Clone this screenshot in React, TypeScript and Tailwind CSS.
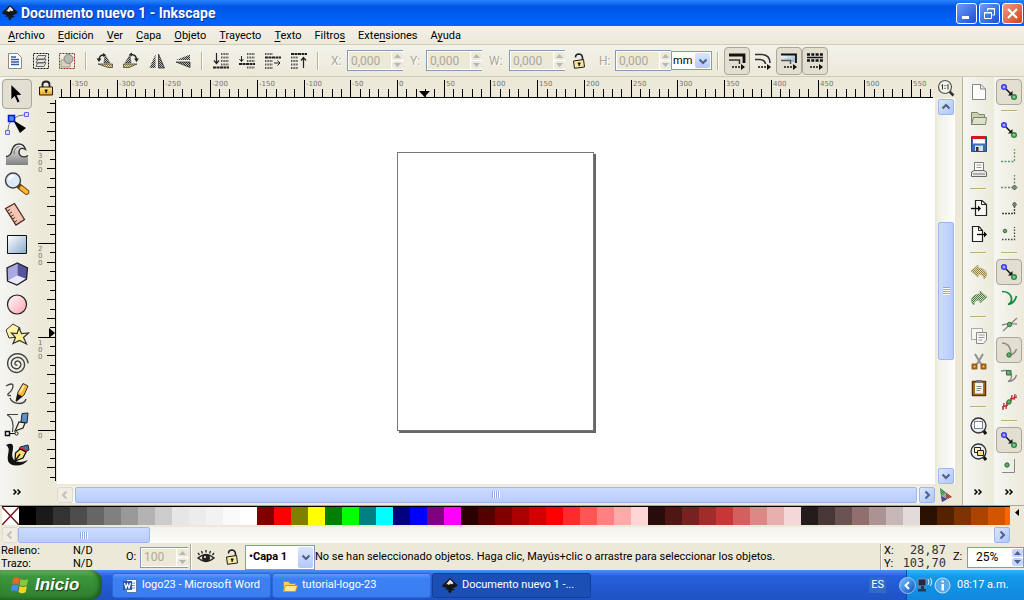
import type { ReactNode } from "react";
import { clsx } from "clsx";

const SWATCHES = [
  "#000000", "#1a1a1a", "#333333", "#4d4d4d", "#666666", "#808080", "#999999", "#b3b3b3", "#cccccc", "#e6e6e6",
  "#ececec", "#f2f2f2", "#f9f9f9", "#ffffff", "#800000", "#ff0000", "#808000", "#ffff00", "#008000", "#00ff00",
  "#008080", "#00ffff", "#000080", "#0000ff", "#800080", "#ff00ff", "#2b0000", "#550000", "#800000", "#aa0000",
  "#d40000", "#ff0000", "#ff2a2a", "#ff5555", "#ff8080", "#ffaaaa", "#ffd5d5", "#280b0b", "#501616", "#782121",
  "#a02c2c", "#c83737", "#d35f5f", "#de8787", "#e9afaf", "#f4d7d7", "#241c1c", "#483737", "#6c5353", "#916f6f",
  "#ac9393", "#c8b7b7", "#e3dbdb", "#2b1100", "#552200", "#803300", "#aa4400", "#d45500", "#ff6600",
];

const MENUS: [string, string, string][] = [
  ["", "A", "rchivo"], ["", "E", "dición"], ["", "V", "er"], ["", "C", "apa"], ["", "O", "bjeto"],
  ["", "T", "rayecto"], ["", "T", "exto"], ["Filtro", "s", ""], ["Exte", "n", "siones"], ["A", "y", "uda"],
];

/* ---------- shared pieces ---------- */

function Svg({ size = 20, children }: { size?: number; children: ReactNode }) {
  return (
    <svg width={size} height={size} viewBox={`0 0 ${size} ${size}`} fill="none" className="block shrink-0" aria-hidden="true">
      {children}
    </svg>
  );
}

function Patterns() {
  return (
    <svg width="0" height="0" className="absolute" aria-hidden="true">
      <defs>
        <pattern id="dither" width="2" height="2" patternUnits="userSpaceOnUse">
          <rect width="1" height="1" fill="#333" />
          <rect x="1" y="1" width="1" height="1" fill="#333" />
          <rect x="1" width="1" height="1" fill="#bbb" />
          <rect y="1" width="1" height="1" fill="#bbb" />
        </pattern>
        <pattern id="ditherGold" width="2" height="2" patternUnits="userSpaceOnUse">
          <rect width="2" height="2" fill="#e6dcae" />
          <rect width="1" height="1" fill="#94803a" />
          <rect x="1" y="1" width="1" height="1" fill="#94803a" />
        </pattern>
        <pattern id="ditherGreen" width="2" height="2" patternUnits="userSpaceOnUse">
          <rect width="2" height="2" fill="#cfe0bd" />
          <rect width="1" height="1" fill="#47763f" />
          <rect x="1" y="1" width="1" height="1" fill="#47763f" />
        </pattern>
        <linearGradient id="blueBox" x1="0" y1="0" x2="1" y2="1">
          <stop offset="0" stopColor="#fff" />
          <stop offset="1" stopColor="#86a9cc" />
        </linearGradient>
        <linearGradient id="pink" x1="0" y1="0" x2="1" y2="1">
          <stop offset="0" stopColor="#fff" />
          <stop offset="1" stopColor="#ff9fb0" />
        </linearGradient>
        <linearGradient id="gold" x1="0" y1="0" x2="0" y2="1">
          <stop offset="0" stopColor="#fff0a0" />
          <stop offset="1" stopColor="#f0a010" />
        </linearGradient>
        <linearGradient id="wave" x1="0" y1="0" x2="0" y2="1">
          <stop offset="0" stopColor="#f2f2f2" />
          <stop offset="1" stopColor="#808080" />
        </linearGradient>
        <linearGradient id="orb" x1="0" y1="0" x2="1" y2="1">
          <stop offset="0" stopColor="#7cc4ff" />
          <stop offset="1" stopColor="#0a4fc0" />
        </linearGradient>
      </defs>
    </svg>
  );
}

function InkscapeLogo() {
  return (
    <Svg size={16}>
      <path d="M8 0 15 6.500Q16.500 8.500 12.500 9.500L10.500 10.500 13 12 10 12.500 8 15.500 6 13.500 7 12 3 11.500 5 10 1 9Q-.5 8 1 6.500Z" fill="#161616" />
      <path d="M8 1.500 11.500 5 10 6.500 8.500 5.500 7 7 5.500 6 4 6.500Z" fill="#e8e8e8" />
    </Svg>
  );
}

function Padlock({ open = false }: { open?: boolean }) {
  return (
    <Svg size={16}>
      {open ? (
        <path d="M4.500 4.500Q4.500 1 8 1Q11.500 1.500 11.500 5V8" stroke="#222" strokeWidth="1.600" />
      ) : (
        <path d="M4.500 8V4.500Q4.500 1.500 8 1.500T11.500 4.500V8" stroke="#222" strokeWidth="1.800" />
      )}
      <path d={open ? "M2.500 8 12.500 6.500 13.500 14 3.500 15.300Z" : "M1.500 7H14.500V15H1.500Z"} fill={open ? "#f6e9a0" : "url(#gold)"} stroke="#1a1a1a" />
      <path d="M6.800 9.500H9.500V11.200H8.800V13H7.500V11.200H6.800Z" fill="#111" />
    </Svg>
  );
}

function ToggleButton({ label, on, className, children }: { label: string; on?: boolean; className?: string; children: ReactNode }) {
  return (
    <button
      type="button"
      aria-label={label}
      className={clsx(
        "flex shrink-0 items-center justify-center",
        on && "rounded border border-[#a9a797] bg-[#e2dfd0]",
        className ?? "size-[26px]",
      )}
    >
      {children}
    </button>
  );
}

function VSep() {
  return <div className="mx-[5px] h-[18px] w-[2px] shrink-0 border-r border-white bg-[#b9b491]" />;
}

function HSep() {
  return (
    <div className="flex h-3 w-full shrink-0 items-center justify-center">
      <div className="h-[2px] w-4 border-b border-[#f6f4ea] bg-[#b9b178]" />
    </div>
  );
}

function Spinner({ active }: { active?: boolean }) {
  const color = active ? "#4d6185" : "#b9b7a9";
  const face = active ? "bg-[#c3d3fd]" : "bg-[#eceadf]";
  return (
    <span className="flex w-[11px] shrink-0 flex-col gap-px py-px">
      <button type="button" aria-label="Aumentar" className={clsx("flex flex-1 items-center justify-center rounded-xs", face)}>
        <svg width="7" height="4" viewBox="0 0 7 4" aria-hidden="true"><path d="M0 4 3.500 0 7 4Z" fill={color} /></svg>
      </button>
      <button type="button" aria-label="Disminuir" className={clsx("flex flex-1 items-center justify-center rounded-xs", face)}>
        <svg width="7" height="4" viewBox="0 0 7 4" aria-hidden="true"><path d="M0 0 3.500 4 7 0Z" fill={color} /></svg>
      </button>
    </span>
  );
}

function NumberField({ label, wide }: { label: string; wide?: boolean }) {
  return (
    <label className="flex shrink-0 items-center pl-[7px] text-xs text-[#aca899]">
      <span className={clsx("[text-shadow:1px_1px_0_#fff]", wide ? "w-5" : "w-4")}>{label}:</span>
      <span className="flex h-[21px] w-14 border border-r-0 border-[#7f9db9] bg-white">
        <input disabled defaultValue="0,000" className="m-px w-[42px] bg-[#ece9d8] pl-[2px] text-xs text-[#aca899]" />
        <Spinner />
      </span>
    </label>
  );
}

function Chevron({ dir, muted }: { dir: "up" | "down" | "left" | "right"; muted?: boolean }) {
  const d = {
    up: "M1.500 6.500 5 3 8.500 6.500",
    down: "M1.500 3.500 5 7 8.500 3.500",
    left: "M6.500 1.500 3 5 6.500 8.500",
    right: "M3.500 1.500 7 5 3.500 8.500",
  }[dir];
  return (
    <Svg size={10}>
      <path d={d} stroke={muted ? "#c4c2b4" : "#4d6185"} strokeWidth="2" />
    </Svg>
  );
}

function ScrollButton({ dir, muted }: { dir: "up" | "down" | "left" | "right"; muted?: boolean }) {
  return (
    <button
      type="button"
      aria-label="Desplazar"
      className={clsx(
        "flex size-4 shrink-0 items-center justify-center rounded-xs border",
        muted ? "border-[#dddbd0] bg-[#f0eee4]" : "border-[#9db6f0] bg-linear-to-br from-[#dce6ff] to-[#aec6fb]",
      )}
    >
      <Chevron dir={dir} muted={muted} />
    </button>
  );
}

function Grip({ vertical }: { vertical?: boolean }) {
  return (
    <span className={clsx("flex", vertical && "flex-col")}>
      {[0, 1, 2, 3].map((i) => (
        <span
          key={i}
          className={clsx("border-white bg-[#8fa9e8]", vertical ? "h-[2px] w-[7px] border-b" : "h-[7px] w-[2px] border-r")}
        />
      ))}
    </span>
  );
}

function DropArrow() {
  return (
    <span className="pointer-events-none m-px flex w-[15px] shrink-0 items-center justify-center rounded-xs bg-linear-to-b from-[#dce6ff] to-[#b3c8fa]">
      <Chevron dir="down" />
    </span>
  );
}

/* ---------- window chrome ---------- */

function TitleBar() {
  const box = "flex size-[21px] items-center justify-center rounded-[3px] border border-white";
  return (
    <header className="flex h-[26px] shrink-0 items-center bg-linear-to-b from-[#2a86ff] via-[#0055e5] via-25% to-[#0066ff] pr-px pl-[2px] text-white">
      <InkscapeLogo />
      <h1 className="ml-[3px] flex-1 text-sm font-bold [text-shadow:1px_1px_0_#10318f]">
        Documento nuevo 1 - Inkscape
      </h1>
      <div className="flex gap-[2px]">
        <button type="button" aria-label="Minimizar" className={clsx(box, "bg-linear-to-br from-[#6f9cf5] to-[#1a4cd8]")}>
          <Svg size={17}><path d="M4 11H11V14H4Z" fill="#fff" /></Svg>
        </button>
        <button type="button" aria-label="Restaurar" className={clsx(box, "bg-linear-to-br from-[#6f9cf5] to-[#1a4cd8]")}>
          <Svg size={17}><path d="M6.500 6V3.500H13.500V10H11.500M6 4H14M3.500 7.500H10.500V13.500H3.500ZM3 8H11" stroke="#fff" /></Svg>
        </button>
        <button type="button" aria-label="Cerrar" className={clsx(box, "bg-linear-to-br from-[#f09a7c] to-[#d43c14]")}>
          <Svg size={17}><path d="M4 4 13 13M13 4 4 13" stroke="#fff" strokeWidth="2.200" /></Svg>
        </button>
      </div>
    </header>
  );
}

function MenuBar() {
  return (
    <nav className="flex h-[19px] shrink-0 items-center gap-[13px] border-b border-[#cfccbb] bg-linear-to-b from-[#f3f2ea] to-[#ece9d8] pt-[2px] pl-2">
      {MENUS.map(([a, u, b]) => (
        <button type="button" key={a + u + b} className="leading-4">
          {a}<span className="underline underline-offset-2">{u}</span>{b}
        </button>
      ))}
    </nav>
  );
}

/* ---------- option bar ---------- */

const scaleArrow = (
  <>
    <path d="M5 16H14" stroke="#111" strokeWidth="1.600" strokeDasharray="2 1" />
    <path d="M14 13 18 16 14 19Z" fill="#111" />
  </>
);

function OptionBar() {
  return (
    <div className="flex h-8 shrink-0 items-center border-b border-[#cfccbb] bg-linear-to-b from-[#f3f2ea] to-[#ece9d8] pl-[2px]">
      <ToggleButton label="Seleccionar todo">
        <Svg>
          <path d="M3.500 2.500H12.500L16.500 6.500V17.500H3.500Z" fill="#fff" stroke="#8a8a86" />
          <path d="M6 6H11M6 8.500H14M6 11H14M6 13.500H14" stroke="#2d5fa6" strokeWidth="1.300" />
        </Svg>
      </ToggleButton>
      <ToggleButton label="Seleccionar capas">
        <Svg>
          <path d="M2.500 2.500H17.500V17.500H2.500Z" stroke="#111" strokeDasharray="2 1" />
          <path d="M7 11.500H15L13 15.500H5ZM7 8H15L13 12H5ZM7 4.500H15L13 8.500H5Z" fill="#e4e4e0" stroke="#666" />
        </Svg>
      </ToggleButton>
      <ToggleButton label="Deseleccionar">
        <Svg>
          <path d="M2.500 2.500H17.500V17.500H2.500Z" stroke="#8b2c2c" strokeDasharray="2 1" />
          <path d="M4 9H13V16H4Z" fill="#d9d3bd" stroke="#a59f88" />
          <circle cx="11.500" cy="8" r="4.500" fill="#b9b9b4" stroke="#85857f" />
        </Svg>
      </ToggleButton>
      <VSep />
      <ToggleButton label="Rotar izquierda">
        <Svg>
          <path d="M10 4 15 12 9 12Z" fill="url(#dither)" stroke="#444" strokeWidth=".6" />
          <path d="M3 13H17.500V16.500L13 16.500Z" fill="url(#ditherGold)" stroke="#444" strokeWidth=".8" />
          <path d="M4 9Q4 4 9 4" stroke="#222" strokeWidth="1.300" /><path d="M1.500 7.500H6.500L4 11ZM8 2 11 4 8 6Z" fill="#222" />
        </Svg>
      </ToggleButton>
      <ToggleButton label="Rotar derecha">
        <Svg>
          <path d="M9 4 4 12 10 12Z" fill="url(#dither)" stroke="#444" strokeWidth=".6" />
          <path d="M16 13H2.500V16.500L8 16.500Z" fill="url(#ditherGold)" stroke="#444" strokeWidth=".8" />
          <path d="M10 3.500Q15.500 3.500 15.500 9" stroke="#222" strokeWidth="1.300" /><path d="M13 7.500H18L15.500 11ZM11 1.500 8 3.500 11 5.500Z" fill="#222" />
        </Svg>
      </ToggleButton>
      <ToggleButton label="Voltear horizontal">
        <Svg><path d="M8.500 3V17H2.500Z" fill="url(#dither)" /><path d="M11.500 3V17H17.500Z" fill="url(#dither)" stroke="#333" strokeWidth=".8" /></Svg>
      </ToggleButton>
      <ToggleButton label="Voltear vertical">
        <Svg><path d="M17 9V3.500L3 9Z" fill="url(#dither)" /><path d="M17 11V16.500L3 11Z" fill="url(#dither)" stroke="#333" strokeWidth=".8" /></Svg>
      </ToggleButton>
      <VSep />
      <ToggleButton label="Bajar al fondo">
        <Svg>
          <path d="M10 3H18M10 6.500H18M10 10H18M10 13.500H18" stroke="#555" strokeWidth="2" strokeDasharray="1 .6" />
          <path d="M2 16.500H18" stroke="#222" strokeWidth="2" strokeDasharray="3 .5" />
          <path d="M5.500 2V12M3 9.500 5.500 12.500 8 9.500" stroke="#222" strokeWidth="1.200" />
        </Svg>
      </ToggleButton>
      <ToggleButton label="Bajar">
        <Svg>
          <path d="M10 3H18M10 6.500H18M10 10H18M10 16.500H18" stroke="#555" strokeWidth="2" strokeDasharray="1 .6" />
          <path d="M2 13H18" stroke="#222" strokeWidth="2" strokeDasharray="3 .5" />
          <path d="M4.500 5V10.500M2.500 8 4.500 10.500 6.500 8" stroke="#222" />
        </Svg>
      </ToggleButton>
      <ToggleButton label="Elevar">
        <Svg>
          <path d="M2 3H10M2 10H10M2 13.500H10M2 17H10" stroke="#555" strokeWidth="2" strokeDasharray="1 .6" />
          <path d="M2 6.500H18" stroke="#222" strokeWidth="2" strokeDasharray="3 .5" />
          <path d="M11 12H17M14.500 9.500 17 12 14.500 14.500" stroke="#222" />
        </Svg>
      </ToggleButton>
      <ToggleButton label="Elevar al frente">
        <Svg>
          <path d="M2 3H18" stroke="#222" strokeWidth="2" strokeDasharray="3 .5" />
          <path d="M2 6.500H9M2 10H9M2 13.500H9M2 17H9" stroke="#555" strokeWidth="2" strokeDasharray="1 .6" />
          <path d="M14.500 17V7M12 9.500 14.500 6.500 17 9.500" stroke="#222" strokeWidth="1.200" />
        </Svg>
      </ToggleButton>
      <VSep />
      <NumberField label="X" />
      <NumberField label="Y" />
      <NumberField label="W" wide />
      <button type="button" aria-label="Bloquear proporción" className="flex w-[27px] shrink-0 justify-center"><Padlock open /></button>
      <NumberField label="H" />
      <label className="flex h-[19px] w-[41px] shrink-0 border border-[#7f9db9] bg-white">
        <select aria-label="Unidad" defaultValue="mm" className="w-6 flex-1 appearance-none pl-px leading-[17px] text-black">
          <option>mm</option><option>px</option>
        </select>
        <DropArrow />
      </label>
      <VSep />
      <ToggleButton label="Escalar grosor" on className="h-[28px] w-[26px]">
        <Svg><path d="M2 4H17V12" stroke="#111" strokeWidth="2.800" /><path d="M2 9H12.500V13" stroke="#333" strokeWidth="1.500" />{scaleArrow}</Svg>
      </ToggleButton>
      <ToggleButton label="Escalar esquinas">
        <Svg><path d="M2 3.500H9Q17 4 17 12M2 8.500H7Q12 9 12.500 13" stroke="#333" strokeWidth="1.600" />{scaleArrow}</Svg>
      </ToggleButton>
      <ToggleButton label="Mover degradados" on className="h-[28px] w-[26px]">
        <Svg><path d="M2 4H17V11H12V9H2Z" fill="url(#blueBox)" /><path d="M2 3.500H17V12" stroke="#111" strokeWidth="1.800" /><path d="M2 9.500H11.500V13" stroke="#555" strokeWidth="1.500" />{scaleArrow}</Svg>
      </ToggleButton>
      <ToggleButton label="Mover patrones" on className="h-[28px] w-[26px]">
        <Svg>
          <path d="M2 3.500H18M2 9.500H18" stroke="#111" strokeWidth="2.500" strokeDasharray="3 1.300" />
          <path d="M2 6.500H18" stroke="#111" strokeWidth="1.500" />
          {scaleArrow}
        </Svg>
      </ToggleButton>
    </div>
  );
}

/* ---------- toolbox ---------- */

const SPIRAL = Array.from({ length: 73 }, (_, i) => {
  const t = i / 72;
  const angle = t * Math.PI * 5.6 + 1.2;
  const r = 0.8 + t * 10.4;
  return `${i ? "L" : "M"}${(13 + r * Math.cos(angle)).toFixed(2)} ${(13 + r * Math.sin(angle)).toFixed(2)}`;
}).join("");

const TOOLS: { label: string; art: ReactNode }[] = [
  { label: "Seleccionar", art: <path d="M7 3.500V19L10.500 15.500 13.500 22 16 20.500 13 14.500 18 14Z" fill="#000" stroke="#fff" strokeWidth=".6" /> },
  {
    label: "Nodos",
    art: (
      <>
        <path d="M3.500 21Q4 4 23 3.500" stroke="#777" />
        <path d="M9 9 22 17 16 22Z" fill="#000" />
        <path d="M1.500 19.500H5.500V23.500H1.500ZM20.500 1.500H24.500V5.500H20.500Z" fill="#dcdcff" stroke="#6666e0" />
        <path d="M4.500 4.500H10.500V10.500H4.500Z" fill="#4a8cf5" stroke="#0a12d8" strokeWidth="1.500" />
      </>
    ),
  },
  {
    label: "Retocar",
    art: (
      <>
        <path d="M2 24V16Q7 15 8 9Q10 3 15 3Q20 3 21.500 8.500Q17 6 15.500 9Q14 13 17 15Q20 17 24 15V24Z" fill="url(#wave)" />
        <path d="M2 15.500Q7 15 8 9Q10 3 15 3Q20 3 21.500 8.500Q17 6 15.500 9Q14 13 17 15Q20 17 24 14.500" stroke="#333" strokeWidth="1.400" />
        <path d="M10 13Q10 6 15.500 5.500" stroke="#777" />
      </>
    ),
  },
  {
    label: "Zoom",
    art: (
      <>
        <path d="M15.500 15.500 22.500 21" stroke="#6a4208" strokeWidth="5.500" strokeLinecap="round" />
        <path d="M17.500 17 22.500 21" stroke="#ffb733" strokeWidth="3.800" strokeLinecap="round" />
        <circle cx="9" cy="9.500" r="7.500" fill="#dceafa" stroke="#444" strokeWidth="1.500" />
        <path d="M5 9Q6 5 10 5" stroke="#fff" strokeWidth="2" />
      </>
    ),
  },
  {
    label: "Medir",
    art: (
      <>
        <path d="M1.500 7.500 10.500 2.500 20.500 18.500 12 24Z" fill="#f3c5b2" stroke="#4a2a22" strokeWidth="1.300" />
        <path d="M3.500 10 6 8.500M5.500 12.500 8 11M7 15.500 9.500 14M8.500 18 11 16.500M10.500 21 13 19.500" stroke="#4a2a22" />
      </>
    ),
  },
  { label: "Rectángulo", art: <path d="M3.500 4.500H22.500V22.500H3.500Z" fill="url(#blueBox)" stroke="#111" /> },
  {
    label: "Caja 3D",
    art: (
      <>
        <path d="M3 7 13.500 2 13.500 14.500 3.500 20Z" fill="#a9a9e0" />
        <path d="M13.500 14.500 22.500 18 13 24 3.500 20Z" fill="#e8e8ff" />
        <path d="M13.500 2 23.500 7 22.500 18 13.500 14.500Z" fill="#54549e" />
        <path d="M13.500 2 23.500 7 22.500 18 13 24 3.500 20 3 7Z" stroke="#222" strokeWidth="1.300" />
      </>
    ),
  },
  { label: "Elipse", art: <circle cx="13" cy="13.500" r="9.500" fill="url(#pink)" stroke="#222" strokeWidth="1.200" /> },
  {
    label: "Estrella",
    art: (
      <>
        <path d="M9 3 16 7 14 16 5 17 2 9Z" fill="#fff3a8" stroke="#333" />
        <path d="M15 7 17.500 12.500 24.500 12 19.500 16.500 22.500 23 15.500 19.500 9 22.500 11.500 16.500 7.500 12 13 12.500Z" fill="#fdf193" stroke="#333" strokeWidth="1.200" />
      </>
    ),
  },
  { label: "Espiral", art: <path d={SPIRAL} stroke="#444" strokeWidth="1.400" /> },
  {
    label: "Lápiz",
    art: (
      <>
        <path d="M2 5Q9 1 9 5Q9 9 4 13Q3 15 7 14.500M6 17Q8 22.500 16 22.500Q21 22 22 18" stroke="#444" strokeWidth="1.300" />
        <path d="M12 20 14 11 19 2.500 24 5 20 14Z" fill="#ffb52b" stroke="#333" />
        <path d="M12 21 13.500 13 18.500 15.500Z" fill="#111" />
        <path d="M20 4.500 16 12" stroke="#ffe9a8" strokeWidth="1.800" />
      </>
    ),
  },
  {
    label: "Pluma",
    art: (
      <>
        <path d="M3 3.500H14M3 3.500Q11 8 8.500 21" stroke="#444" strokeWidth="1.200" />
        <path d="M17 11 18 2.500 24 2 23 12Z" fill="#5590c8" stroke="#223" />
        <path d="M11 20 15 11 21 12 19 17Z" fill="#f1f1e0" stroke="#222" strokeWidth="1.200" />
        <path d="M5 22.500H13" stroke="#111" />
        <path d="M1.500 20.500H5.500V24.500H1.500Z" fill="#fff" stroke="#111" strokeWidth="1.500" />
        <circle cx="12.500" cy="22.500" r="1.600" fill="#fff" stroke="#111" />
      </>
    ),
  },
  {
    label: "Caligrafía",
    art: (
      <>
        <path d="M2 4Q10 0 9 8Q7 16 10 19Q15 23 24 19Q20 24.500 12 24.500Q2 24 4 14Q6 6 2 4Z" fill="#111" />
        <path d="M16 6 24 4 25 9 19 12Z" fill="#3b78b5" stroke="#222" />
        <path d="M15 7 23 9.500" stroke="#d22" strokeWidth="2" />
        <path d="M11 20 11.500 12 16 8 22 11 19 17Z" fill="#ffdf7a" stroke="#111" strokeWidth="1.300" />
        <path d="M11 20 16 13" stroke="#111" strokeWidth="1.300" />
      </>
    ),
  },
];

function MoreButton() {
  return (
    <button type="button" aria-label="Más herramientas" className="mt-auto mb-[7px] flex h-3 w-full shrink-0 items-center justify-center">
      <Svg size={10}><path d="M1.500 2.500 4 5 1.500 7.500M5.500 2.500 8 5 5.500 7.500" stroke="#000" strokeWidth="1.500" /></Svg>
    </button>
  );
}

function Toolbox() {
  return (
    <aside className="flex w-[34px] shrink-0 flex-col items-center bg-linear-to-r from-[#f5f5f3] to-[#eceada] pt-[2px]">
      {TOOLS.map((tool, i) => (
        <ToggleButton key={tool.label} label={tool.label} on={i === 0} className="size-[30px]">
          <Svg size={26}>{tool.art}</Svg>
        </ToggleButton>
      ))}
      <MoreButton />
    </aside>
  );
}

/* ---------- rulers and canvas ---------- */

const UNIT = 0.9345;

function HorizontalRuler() {
  const ticks = Array.from({ length: 94 }, (_, i) => (i - 36) * 10);
  return (
    <svg width="100%" height="21" className="block" aria-hidden="true">
      {ticks.map((v) => {
        const x = Math.round(340 + v * UNIT);
        const major = v % 50 === 0;
        return (
          <g key={v}>
            <rect x={x} y={major ? 3 : 12} width="1" height={major ? 17 : 8} fill="#000" />
            {major && <text x={x + 2} y="9" fontSize="7" fill="#77756a" fontFamily="DejaVu Sans">{v}</text>}
          </g>
        );
      })}
      <rect x="2" y="20" width="874" height="1" fill="#000" />
      <path d="M362 14H373L367.500 20Z" fill="#000" />
    </svg>
  );
}

function VerticalRuler() {
  const ticks = Array.from({ length: 41 }, (_, i) => (i - 5) * 10);
  return (
    <svg width="23" height="100%" className="block" aria-hidden="true">
      {ticks.map((v) => {
        const y = Math.round(332 - v * UNIT);
        const major = v % 100 === 0;
        const start = major ? 4 : v % 20 === 0 ? 13 : 16;
        return (
          <g key={v}>
            <rect x={start} y={y} width={22 - start} height="1" fill="#000" />
            {major &&
              String(v).split("").map((digit, i) => (
                <text key={i} x="4" y={y + 8 + i * 7} fontSize="7" fill="#77756a" fontFamily="DejaVu Sans">{digit}</text>
              ))}
          </g>
        );
      })}
      <rect x="21" y="2" width="1" height="381" fill="#000" />
      <path d="M15 230V240L21 235Z" fill="#000" />
    </svg>
  );
}

function Workspace() {
  return (
    <main className="grid min-w-0 flex-1 grid-cols-[23px_minmax(0,1fr)_27px] grid-rows-[21px_minmax(0,1fr)_21px]">
      <button type="button" aria-label="Bloquear guías" className="flex items-center justify-center"><Padlock /></button>
      <HorizontalRuler />
      <button type="button" aria-label="Zoom 1:1" className="flex items-center pl-[2px]">
        <Svg size={18}>
          <path d="M12 12 16.500 16.500" stroke="#333" strokeWidth="2.500" />
          <circle cx="8" cy="8" r="6.500" fill="#f2f2ea" stroke="#555" strokeWidth="1.200" />
          <path d="M4.500 6.500 5.500 5.500V10.500M10 6.500 11 5.500V10.500" stroke="#333" /><path d="M8 6V7.200M8 8.800V10" stroke="#333" />
        </Svg>
      </button>
      <VerticalRuler />
      <div className="relative overflow-hidden bg-white">
        <div className="absolute top-[54px] left-[340px] h-[279px] w-[197px] border border-[#777] bg-white shadow-[2px_2px_0_#666]" />
      </div>
      <div className="mr-[7px] ml-[2px] flex flex-col items-center gap-px bg-linear-to-r from-[#f0efe6] to-[#fefefb] pt-px">
        <ScrollButton dir="up" />
        <div className="grow-[107] basis-0" />
        <div className="flex w-4 grow-[139] basis-0 items-center justify-center rounded-xs border border-[#9db6f0] bg-linear-to-r from-[#cddbff] to-[#b7cbfc]">
          <Grip vertical />
        </div>
        <div className="grow-[108] basis-0" />
        <ScrollButton dir="down" />
      </div>
      <div />
      <div className="my-[2px] flex items-center gap-[2px] bg-linear-to-b from-[#f0efe6] to-[#fefefb]">
        <ScrollButton dir="left" muted />
        <div className="flex h-4 flex-1 items-center justify-center rounded-xs border border-[#9db6f0] bg-linear-to-b from-[#cddbff] to-[#b7cbfc]">
          <Grip />
        </div>
        <ScrollButton dir="right" />
      </div>
      <button type="button" aria-label="Gestión de color" className="flex items-center pl-[2px]">
        <Svg size={16}>
          <path d="M3 1 15 10 5 15Z" fill="#a8b8a8" />
          <path d="M3 1 9 5.500 4 9Z" fill="#2fae4a" /><path d="M9 5.500 15 10 9 12Z" fill="#c33a3a" /><path d="M4 9 10 12 5 15Z" fill="#3a2fb0" />
          <path d="M3 1 15 10 5 15Z" fill="url(#dither)" opacity=".25" />
        </Svg>
      </button>
    </main>
  );
}

/* ---------- command and snap bars ---------- */

const snapNodes = (
  <>
    <path d="M7 7 12 12" stroke="#111" strokeWidth="1.500" /><path d="M13.500 9V13.500H9Z" fill="#111" />
    <circle cx="5" cy="5" r="2.300" fill="#a9a9ff" stroke="#3a3af0" strokeWidth="1.500" />
    <circle cx="15" cy="15" r="2.300" fill="#8fc49a" stroke="#2c8a3c" strokeWidth="1.500" />
  </>
);
const greenDot = (x: number, y: number) => <circle cx={x} cy={y} r="2.200" fill="#5cab6a" stroke="#2f6a3b" />;

type Item = { label: string; on?: boolean; art: ReactNode } | null;

const COMMANDS: Item[] = [
  { label: "Nuevo", art: <path d="M4.500 2.500H13L17.500 7V17.500H4.500ZM12.500 2.500V7H17.500" fill="#fcfcfa" stroke="#888" /> },
  { label: "Abrir", art: <><path d="M3.500 16.500V4.500H9.500L11 6.500H16.500V9" fill="#c9cfb3" stroke="#7b8464" /><path d="M3.500 16.500 5.500 9.500H18.500L17.500 16.500Z" fill="#dde2cc" stroke="#7b8464" /></> },
  { label: "Guardar", art: <><path d="M3.500 2.500H18.500V17.500H3.500Z" fill="#3b6fb6" stroke="#274a80" /><path d="M5 4H17V9.500H5Z" fill="#fff" /><path d="M4 2H18V5H4Z" fill="#d31a1a" /><path d="M7 11.500H15V17H7Z" fill="#d8dde4" /><path d="M8 13H10.500V17H8Z" fill="#333" /></> },
  { label: "Imprimir", art: <><path d="M6.500 11V2.500H15.500V11" fill="#fff" stroke="#777" /><path d="M8.500 5H13.500M8.500 7.500H13.500" stroke="#999" /><path d="M3.500 16.500V12L6 10.500H16L18.500 12V16.500Z" fill="#e8e8e4" stroke="#666" /><path d="M5 14H17" stroke="#777" /></> },
  null,
  { label: "Importar", art: <><path d="M7.500 2.500H14L18.500 6.500V17.500H7.500Z" fill="#fafaf5" stroke="#222" strokeWidth="1.200" /><path d="M13.500 2.500V6.500H18" stroke="#222" /><path d="M3 10.500H11" stroke="#000" strokeWidth="1.300" /><path d="M10 7.500 13 10.500 10 13.500Z" fill="#000" /></> },
  { label: "Exportar", art: <><path d="M4.500 2.500H11L14.500 6.500V17.500H4.500Z" fill="#fafaf5" stroke="#222" strokeWidth="1.200" /><path d="M10.500 2.500V6.500H14.500" stroke="#222" /><path d="M9 10.500H17" stroke="#000" strokeWidth="1.300" /><path d="M16 7.500 19 10.500 16 13.500Z" fill="#000" /></> },
  null,
  { label: "Deshacer", art: <path d="M3 9 10 3V6Q16 6 18.500 11Q19 15 16 17Q16.500 12 10 12V15Z" fill="url(#ditherGold)" stroke="#a39658" strokeWidth=".6" /> },
  { label: "Rehacer", art: <path d="M19 9 12 3V6Q6 6 3.500 11Q3 15 6 17Q5.500 12 12 12V15Z" fill="url(#ditherGreen)" stroke="#6d8f62" strokeWidth=".6" /> },
  null,
  { label: "Copiar", art: <><path d="M3.500 2.500H14.500V13.500H3.500Z" fill="#f6f6f2" stroke="#aaa" /><path d="M8.500 6.500H18.500V14L15.500 17.500H8.500Z" fill="#f6f6f2" stroke="#888" /><path d="M10.500 9H16.500M10.500 11.500H16.500M10.500 14H14" stroke="#999" /></> },
  { label: "Cortar", art: <><path d="M7 2 13 12M15 2 9 12" stroke="#909090" strokeWidth="2" /><path d="M4.500 12.500H8.500V16.500H4.500ZM13.500 12.500H17.500V16.500H13.500Z" stroke="#9a5f14" strokeWidth="2" fill="#e8c68a" strokeLinejoin="round" /></> },
  { label: "Pegar", art: <><path d="M4.500 3.500H17.500V17.500H4.500Z" fill="#b5721d" stroke="#5c3808" strokeLinejoin="round" strokeWidth="1.500" /><path d="M7 5H15V15.500H7Z" fill="#f4f4ee" /><path d="M8 2H14V5H8Z" fill="#777" /><path d="M8.500 8.500H13.500M8.500 10.500H13.500M8.500 12.500H12" stroke="#888" /></> },
  null,
  { label: "Zoom selección", art: <><path d="M15 14 18 18" stroke="#111" strokeWidth="3" /><circle cx="10.500" cy="9.500" r="7.500" fill="#e3eefb" stroke="#333" strokeWidth="1.300" /><path d="M6.500 5.500H14.500V12.500H6.500Z" fill="#fff" stroke="#111" strokeDasharray="1 1" /></> },
  { label: "Zoom dibujo", art: <><path d="M15 14 18 18" stroke="#111" strokeWidth="3" /><circle cx="10.500" cy="9.500" r="7.500" fill="#e3eefb" stroke="#333" strokeWidth="1.300" /><path d="M6.500 5.500H12.500V10.500H6.500Z" fill="#fff3c8" stroke="#222" /><path d="M9.500 8.500H15.500V13.500H9.500Z" fill="#ffd88a" stroke="#222" /></> },
];

const SNAPS: Item[] = [
  { label: "Ajuste", on: true, art: snapNodes },
  null,
  { label: "Ajustar cajas", art: snapNodes },
  { label: "Bordes", art: <path d="M2 15.500H15.500V3" stroke="#5f9a6a" strokeWidth="1.300" strokeDasharray="2 1.500" /> },
  { label: "Esquinas", art: <><path d="M2 15.500H15.500V3" stroke="#6f7f72" strokeWidth="1.300" strokeDasharray="2 1.500" /><path d="M15.500 13 18 15.500 15.500 18 13 15.500Z" fill="#6f9a78" stroke="#555" /></> },
  { label: "Medios de borde", art: <><path d="M3 15.500H15.500V6" stroke="#444" strokeWidth="1.300" strokeDasharray="2 1" /><path d="M15.500 4 17.500 6.500 15.500 9 13.500 6.500Z" fill="#5f9a6c" stroke="#555" /></> },
  { label: "Centros", art: <><path d="M3 15.500H15.500V3" stroke="#444" strokeWidth="1.300" strokeDasharray="1.500 1.500" /><circle cx="6" cy="7" r="1.800" fill="#5cab6a" stroke="#456a4c" /></> },
  null,
  { label: "Ajustar nodos", on: true, art: snapNodes },
  { label: "Trayectos", art: <path d="M3 3.500Q11 3.500 12.500 10Q13 15 9 16.500Q15.500 15.500 17.500 8" stroke="#188a3a" strokeWidth="1.700" /> },
  { label: "Intersecciones", art: <><path d="M4 17 18 4M3 11Q10 9 18 10" stroke="#888" strokeWidth="1.400" />{greenDot(10.500, 10.500)}</> },
  { label: "Nodos puntiagudos", on: true, art: <><path d="M3 3Q11 3 12 13M11 15Q16 14 17.500 9" stroke="#888" strokeWidth="1.500" />{greenDot(10, 15)}</> },
  { label: "Nodos suaves", art: <><path d="M2 5Q12 3 12.500 10Q12.500 14 9 15.500Q16 15 17.500 9" stroke="#888" strokeWidth="1.400" /><path d="M7.500 4.500H12V9H7.500Z" fill="#5fae70" stroke="#3a6a44" /></> },
  { label: "Puntos medios", art: <><path d="M3 17 18 3" stroke="#999" /><path d="M4 18 5 11M7 17 8 10M3 15 9 13M12 9 13 3M15 8 16 2M11 7 18 5" stroke="#c23a3a" strokeWidth="1.400" />{greenDot(10, 10)}</> },
  null,
  { label: "Otros", on: true, art: snapNodes },
  { label: "Centro de objeto", art: <><path d="M3 16.500H15.500V3" stroke="#888" />{greenDot(8, 9)}</> },
];

function SideBar({ items }: { items: Item[] }) {
  return (
    <div className="flex flex-1 flex-col items-center bg-linear-to-r from-[#f5f5f3] to-[#eceada] pt-[2px]">
      {items.map((item, i) =>
        item ? (
          <ToggleButton key={item.label} label={item.label} on={item.on}>
            <Svg>{item.art}</Svg>
          </ToggleButton>
        ) : (
          <HSep key={i} />
        ),
      )}
      <MoreButton />
    </div>
  );
}

/* ---------- palette ---------- */

function Palette() {
  return (
    <section className="flex shrink-0 bg-[#ece9d8]">
      <div className="min-w-0 flex-1 pl-[2px]">
        <div className="flex h-[19px] overflow-hidden border-t border-black">
          <button type="button" aria-label="Ninguno" className="h-[18px] w-[17px] shrink-0 bg-white">
            <svg width="17" height="18" viewBox="0 0 17 18" aria-hidden="true"><path d="M0 0 17 18M17 0 0 18" stroke="#7a1018" strokeWidth="1.500" /></svg>
          </button>
          {SWATCHES.map((color, i) => (
            <button type="button" key={i} aria-label={color} className="h-[18px] w-[17px] shrink-0" style={{ backgroundColor: color }} />
          ))}
        </div>
        <div className="mt-[2px] flex h-4 items-center bg-linear-to-b from-[#f3f2ec] to-[#fefefb]">
          <ScrollButton dir="left" muted />
          <div className="flex h-4 w-[132px] items-center justify-center rounded-xs border border-[#9db6f0] bg-linear-to-b from-[#cddbff] to-[#b7cbfc]">
            <Grip />
          </div>
          <div className="flex-1" />
          <ScrollButton dir="right" />
        </div>
      </div>
      <button type="button" aria-label="Menú de paleta" className="flex h-3 w-[14px] items-center justify-center">
        <svg width="4" height="7" viewBox="0 0 4 7" aria-hidden="true"><path d="M4 0V7L0 3.500Z" fill="#000" /></svg>
      </button>
    </section>
  );
}

/* ---------- status bar ---------- */

function StatusBar() {
  return (
    <footer className="flex h-[27px] shrink-0 items-center bg-[#ece9d8] pt-px pl-px">
      <dl className="grid w-[125px] shrink-0 grid-cols-[72px_1fr] leading-[13px]">
        <dt>Relleno:</dt><dd>N/D</dd>
        <dt>Trazo:</dt><dd>N/D</dd>
      </dl>
      <label className="flex shrink-0 items-center">
        <span className="w-[14px]">O:</span>
        <span className="flex h-[21px] w-12 border border-r-0 border-[#7f9db9] bg-white">
          <input disabled defaultValue="100" className="m-px w-[34px] bg-[#ece9d8] pl-[2px] text-xs text-[#aca899]" />
          <Spinner />
        </span>
      </label>
      <div className="ml-[2px] h-full w-[2px] shrink-0 border-r border-white bg-[#aca899]" />
      <button type="button" aria-label="Visibilidad" className="ml-1 shrink-0">
        <Svg>
          <path d="M2 11Q10 4 18 11Q10 18 2 11Z" fill="#eee" stroke="#222" strokeWidth="1.500" />
          <circle cx="10" cy="11" r="4" fill="#222" /><circle cx="9" cy="10" r="1" fill="#fff" />
          <path d="M3.500 8 2 6M6.500 6.500 5.500 4M10 5.500V3M13.500 6.500 14.500 4M16.500 8 18 6" stroke="#222" strokeWidth="1.300" />
        </Svg>
      </button>
      <button type="button" aria-label="Bloquear capa" className="mr-[5px] ml-2 shrink-0"><Padlock open /></button>
      <label className="flex h-[25px] w-[70px] shrink-0 border border-[#7f9db9] bg-white">
        <select aria-label="Capa" className="w-12 flex-1 appearance-none pl-[3px] font-bold text-black">
          <option>•Capa 1</option>
        </select>
        <DropArrow />
      </label>
      <p className="min-w-0 flex-1 truncate">
        No se han seleccionado objetos. Haga clic, Mayús+clic o arrastre para seleccionar los objetos.
      </p>
      <div className="h-full w-[2px] shrink-0 border-r border-white bg-[#aca899]" />
      <dl className="ml-[2px] grid w-[62px] shrink-0 grid-cols-[16px_1fr] leading-[13px]">
        <dt>X:</dt><dd className="text-right font-['DejaVu_Sans_Mono',monospace] text-xs leading-[13px] text-[#333]">28,87</dd>
        <dt>Y:</dt><dd className="text-right font-['DejaVu_Sans_Mono',monospace] text-xs leading-[13px] text-[#333]">103,70</dd>
      </dl>
      <label className="ml-[7px] flex shrink-0 items-center">
        <span className="w-[14px]">Z:</span>
        <span className="flex h-[21px] w-[57px] border border-[#7f9db9] bg-white">
          <input defaultValue="25%" className="w-[44px] pl-2 text-xs text-black" />
          <Spinner active />
        </span>
      </label>
    </footer>
  );
}

/* ---------- taskbar ---------- */

function TaskButton({ active, icon, children }: { active?: boolean; icon: ReactNode; children: ReactNode }) {
  return (
    <button
      type="button"
      className={clsx(
        "flex h-[25px] w-[159px] items-center gap-1 rounded-[3px] border pl-[9px]",
        active ? "border-[#153f94] bg-[#1c4fb5]" : "border-[#2a66dd] bg-linear-to-b from-[#5a9bff] via-[#3c81f3] via-20% to-[#3a7df0]",
      )}
    >
      {icon}
      <span>{children}</span>
    </button>
  );
}

function Taskbar() {
  return (
    <footer className="flex h-[30px] shrink-0 items-center bg-linear-to-b from-[#4a93f3] via-[#2560dc] via-20% to-[#1f52c4] text-white">
      <button
        type="button"
        className="flex h-full w-[102px] items-center gap-[6px] rounded-r-xl bg-linear-to-b from-[#6cb567] via-[#3c983c] via-20% to-[#2e7d2e] pl-[11px] shadow-[inset_-3px_-1px_4px_#1d5a1d]"
      >
        <Svg size={18}>
          <path d="M2 3Q5 0 8.500 2.500L7.500 8.500Q4 6.500 1 8.500Z" fill="#f0642c" />
          <path d="M9.500 3Q13 5 17 3L16 9Q12 11 8.500 9Z" fill="#8cc63f" />
          <path d="M1 9.500Q4 7.500 7.300 9.500L6.500 15.500Q3 13.500 0 15.500Z" fill="#4a8af4" />
          <path d="M8.500 10Q12 12 15.800 10L14.800 16Q11 18.500 7.500 16Z" fill="#fcd12a" />
        </Svg>
        <span className="font-['Liberation_Sans',sans-serif] text-[17px] font-bold italic [text-shadow:1px_1px_1px_#1c3f1c]">Inicio</span>
      </button>
      <div className="ml-[10px] flex flex-1 gap-px pt-px">
        <TaskButton
          icon={
            <Svg size={16}>
              <path d="M4.500 1.500H14.500V14.500H4.500Z" fill="#fff" stroke="#5577aa" /><path d="M10 5H13M10 7.500H13M10 10H13" stroke="#6a8cc8" />
              <path d="M1 3H10V12H1Z" fill="#2b57a5" /><path d="M2.500 5 4 10 5.500 6 7 10 8.500 5" stroke="#fff" strokeWidth="1.200" />
            </Svg>
          }
        >
          logo23 - Microsoft Word
        </TaskButton>
        <TaskButton
          icon={
            <Svg size={16}>
              <path d="M1.500 13.500V3.500H6.500L8 5.500H13.500V7" fill="#f5cf5a" stroke="#b88a20" /><path d="M1.500 13.500 3.500 7.500H15.500L13.500 13.500Z" fill="#ffe894" stroke="#c79a2c" />
            </Svg>
          }
        >
          tutorial-logo-23
        </TaskButton>
        <TaskButton active icon={<InkscapeLogo />}>Documento nuevo 1 -...</TaskButton>
      </div>
      <span className="mr-5 bg-[#316ac5] px-[2px]">ES</span>
      <div className="flex h-full w-[118px] items-center border-l border-[#0d4aa5] bg-linear-to-b from-[#35b3f5] via-[#139ae8] via-20% to-[#1187dd]">
        <button type="button" aria-label="Mostrar iconos ocultos" className="-ml-2">
          <Svg size={17}>
            <circle cx="8.500" cy="8.500" r="8" fill="url(#orb)" stroke="#bfe0ff" strokeWidth=".7" /><path d="M10 5 6.500 8.500 10 12" stroke="#fff" strokeWidth="2" />
          </Svg>
        </button>
        <Svg size={18}>
          <path d="M2 3H10V10H2Z" fill="#26264a" stroke="#8a8aa8" /><path d="M5 10H8V13H5ZM2 13H10V15.500H2Z" fill="#33335a" />
          <path d="M12 3Q14 6 12 9M14.500 2Q17 6 14.500 10" stroke="#eee" />
        </Svg>
        <Svg size={17}>
          <circle cx="8.500" cy="8.500" r="7.500" fill="#56a8ea" stroke="#cfe7fa" />
          <path d="M7.500 3.500H10V5.500H7.500ZM7.500 7H10V13.500H7.500Z" fill="#fff" />
        </Svg>
        <time className="ml-[6px]">08:17 a.m.</time>
      </div>
    </footer>
  );
}

export default function App() {
  return (
    <div className="flex h-screen flex-col overflow-hidden bg-[#ece9d8] font-['Roboto','Noto_Sans',sans-serif] text-[11px] text-black">
      <Patterns />
      <TitleBar />
      <MenuBar />
      <OptionBar />
      <div className="flex min-h-0 flex-1 border-b border-[#aca899]">
        <Toolbox />
        <Workspace />
        <aside className="flex w-[62px] shrink-0 border-l border-[#b9b491]">
          <SideBar items={COMMANDS} />
          <SideBar items={SNAPS} />
        </aside>
      </div>
      <Palette />
      <StatusBar />
      <Taskbar />
    </div>
  );
}
